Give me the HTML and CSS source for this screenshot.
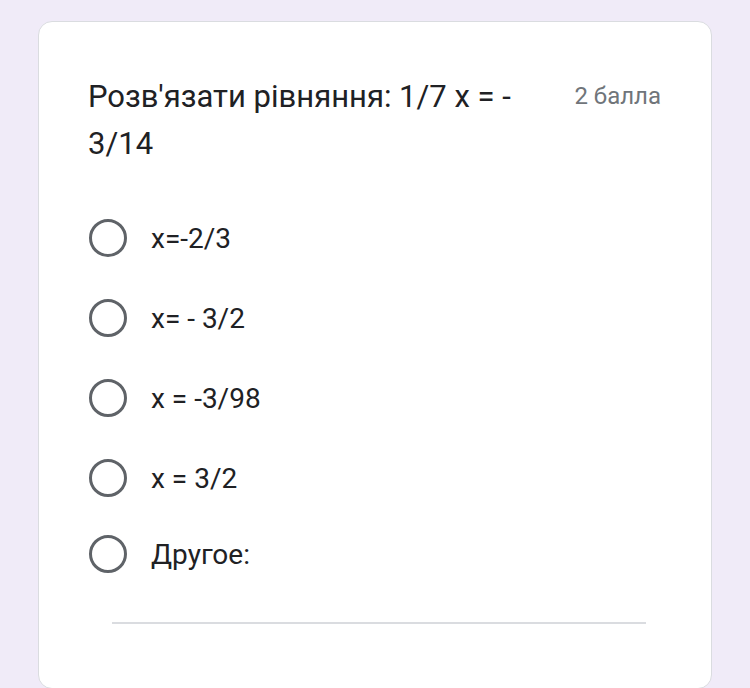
FILE: index.html
```html
<!DOCTYPE html>
<html lang="uk">
<head>
<meta charset="utf-8">
<link rel="stylesheet" href="styles.css">
</head>
<body>
<div class="card">
  <div class="header">
    <div class="title">Розв'язати рівняння: 1/7 х = - 3/14</div>
    <div class="points">2 балла</div>
  </div>
  <div class="options">
    <div class="option"><span class="radio"></span><span class="label">x=-2/3</span></div>
    <div class="option"><span class="radio"></span><span class="label">x= - 3/2</span></div>
    <div class="option"><span class="radio"></span><span class="label">x = -3/98</span></div>
    <div class="option"><span class="radio"></span><span class="label">x = 3/2</span></div>
    <div class="option other"><span class="radio"></span><span class="label">Другое:</span></div>
  </div>
  <div class="other-line"></div>
</div>
</body>
</html>
```

FILE: styles.css
```css
html, body {
  margin: 0;
  padding: 0;
  background: #f0ebf8;
  font-family: Roboto, "Liberation Sans", sans-serif;
  overflow: hidden;
}
.card {
  margin: 21px 0 0 38px;
  width: 674px;
  height: 668px;
  box-sizing: border-box;
  background: #fff;
  border: 1px solid #dadce0;
  border-radius: 14px;
  padding: 51px 50px 0 49px;
}
.header {
  display: flex;
  align-items: flex-start;
}
.title {
  flex: 1;
  margin-right: 40px;
  font-size: 31px;
  line-height: 47px;
  color: #202124;
}
.points {
  font-size: 24px;
  line-height: 47px;
  color: #70757a;
}
.options {
  margin-top: 31px;
  display: flex;
  flex-direction: column;
}
.option {
  display: flex;
  align-items: center;
  height: 80px;
}
.option.other {
  height: 72px;
}
.radio {
  width: 32px;
  height: 32px;
  border: 3.5px solid #5f6368;
  border-radius: 50%;
  margin-left: 1px;
  flex: none;
}
.label {
  margin-left: 24px;
  font-size: 28px;
  color: #202124;
}
.other-line {
  margin: 32px 15px 0 24px;
  height: 2px;
  background: #dadce0;
}
```
